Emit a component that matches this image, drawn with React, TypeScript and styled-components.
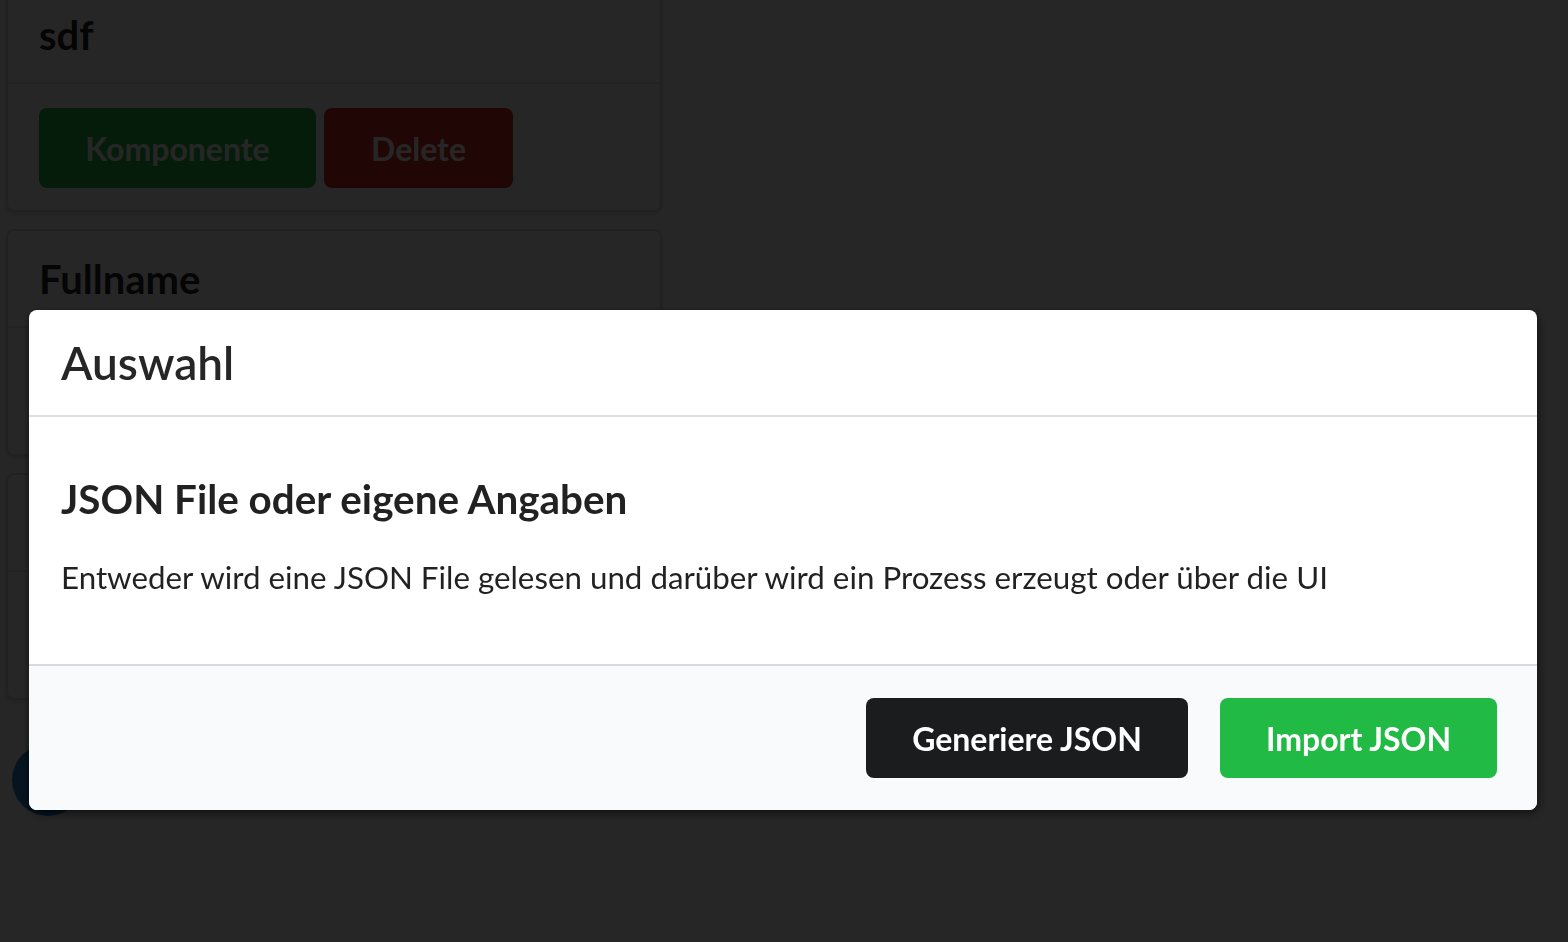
import styled, { createGlobalStyle } from "styled-components";

const GlobalStyle = createGlobalStyle`
  html, body {
    margin: 0;
    padding: 0;
    background: #ffffff;
    font-family: Lato, "Noto Sans", sans-serif;
    color: rgba(0, 0, 0, 0.87);
    overflow: hidden;
  }
  * {
    box-sizing: border-box;
  }
`;

const cards = [
  { title: "sdf", actions: true },
  { title: "Fullname", actions: false },
  { title: "", actions: false },
];

export default function App() {
  return (
    <>
      <GlobalStyle />
      <Page>
        <Column>
          {cards.map((c, i) => (
            <Card key={i}>
              <CardHeader>{c.title}</CardHeader>
              <CardBody>
                {c.actions && (
                  <>
                    <PageButton color="#21ba45" width={277}>
                      Komponente
                    </PageButton>
                    <PageButton color="#db2828" width={189}>
                      Delete
                    </PageButton>
                  </>
                )}
              </CardBody>
            </Card>
          ))}
          <RoundButton />
        </Column>
      </Page>

      {/* dimmer + modal */}
      <Dimmer>
        <Modal>
          <ModalHeader>Auswahl</ModalHeader>
          <ModalContent>
            <ContentTitle>JSON File oder eigene Angaben</ContentTitle>
            <ContentText>
              Entweder wird eine JSON File gelesen und darüber wird ein Prozess
              erzeugt oder über die UI
            </ContentText>
          </ModalContent>
          <ModalActions>
            <ActionButton color="#1b1c1d" width={322}>
              Generiere JSON
            </ActionButton>
            <ActionButton color="#21ba45" width={277}>
              Import JSON
            </ActionButton>
          </ModalActions>
        </Modal>
      </Dimmer>
    </>
  );
}

//styles
const Page = styled.div`
  width: 1568px;
  height: 942px;
  overflow: hidden;
`;

const Column = styled.div`
  width: 662px;
  margin-top: -15px;
  padding-left: 6px;
  display: flex;
  flex-direction: column;
  gap: 17px;
`;

const Card = styled.div`
  border: 2px solid rgba(34, 36, 38, 0.15);
  border-radius: 8px;
  box-shadow: 0 2px 4px 0 rgba(34, 36, 38, 0.15);
  background: #fff;
`;

const CardHeader = styled.div`
  height: 97px;
  padding: 0 31px;
  display: flex;
  align-items: center;
  font-size: 40px;
  font-weight: 700;
  line-height: 1.2;
  border-bottom: 2px solid rgba(34, 36, 38, 0.1);
  color: rgba(0, 0, 0, 0.87);
`;

const CardBody = styled.div`
  min-height: 126px;
  padding: 24px 31px 22px;
  display: flex;
  gap: 8px;
`;

const PageButton = styled.button<{ color: string; width: number }>`
  width: ${(p) => p.width}px;
  height: 80px;
  border: none;
  border-radius: 8px;
  background: ${(p) => p.color};
  color: #fff;
  font-family: Lato, "Noto Sans", sans-serif;
  font-size: 32px;
  font-weight: 700;
`;

const RoundButton = styled.div`
  width: 72px;
  height: 72px;
  margin-top: 27px;
  margin-left: 6px;
  border-radius: 50%;
  background: #2185d0;
`;

const Dimmer = styled.div`
  position: fixed;
  inset: 0;
  background: rgba(0, 0, 0, 0.85);
  padding: 310px 0 0 29px;
`;

const Modal = styled.div`
  width: 1508px;
  background: #fff;
  border-radius: 8px;
  box-shadow: 2px 4px 12px rgba(0, 0, 0, 0.4), 0 2px 6px rgba(0, 0, 0, 0.3);
  overflow: hidden;
`;

const ModalHeader = styled.div`
  height: 107px;
  padding: 0 32px;
  display: flex;
  align-items: center;
  font-size: 46px;
  font-weight: 600;
  line-height: 1.2;
  color: rgba(0, 0, 0, 0.85);
  border-bottom: 2px solid rgba(34, 36, 38, 0.15);
`;

const ModalContent = styled.div`
  height: 247px;
  padding: 58px 32px 0;
`;

const ContentTitle = styled.h3`
  margin: 0 0 36px;
  font-size: 40.4px;
  font-weight: 700;
  line-height: 1.2;
  color: rgba(0, 0, 0, 0.87);
`;

const ContentText = styled.p`
  margin: 0;
  font-size: 31.3px;
  font-weight: 400;
  line-height: 1.2;
  color: rgba(0, 0, 0, 0.87);
`;

const ModalActions = styled.div`
  display: flex;
  justify-content: flex-end;
  gap: 32px;
  padding: 32px 40px;
  background: #f9fafb;
  border-top: 2px solid rgba(34, 36, 38, 0.15);
`;

const ActionButton = styled.button<{ color: string; width: number }>`
  width: ${(p) => p.width}px;
  height: 80px;
  border: none;
  border-radius: 8px;
  background: ${(p) => p.color};
  color: #fff;
  font-family: Lato, "Noto Sans", sans-serif;
  font-size: 32px;
  font-weight: 700;
`;
